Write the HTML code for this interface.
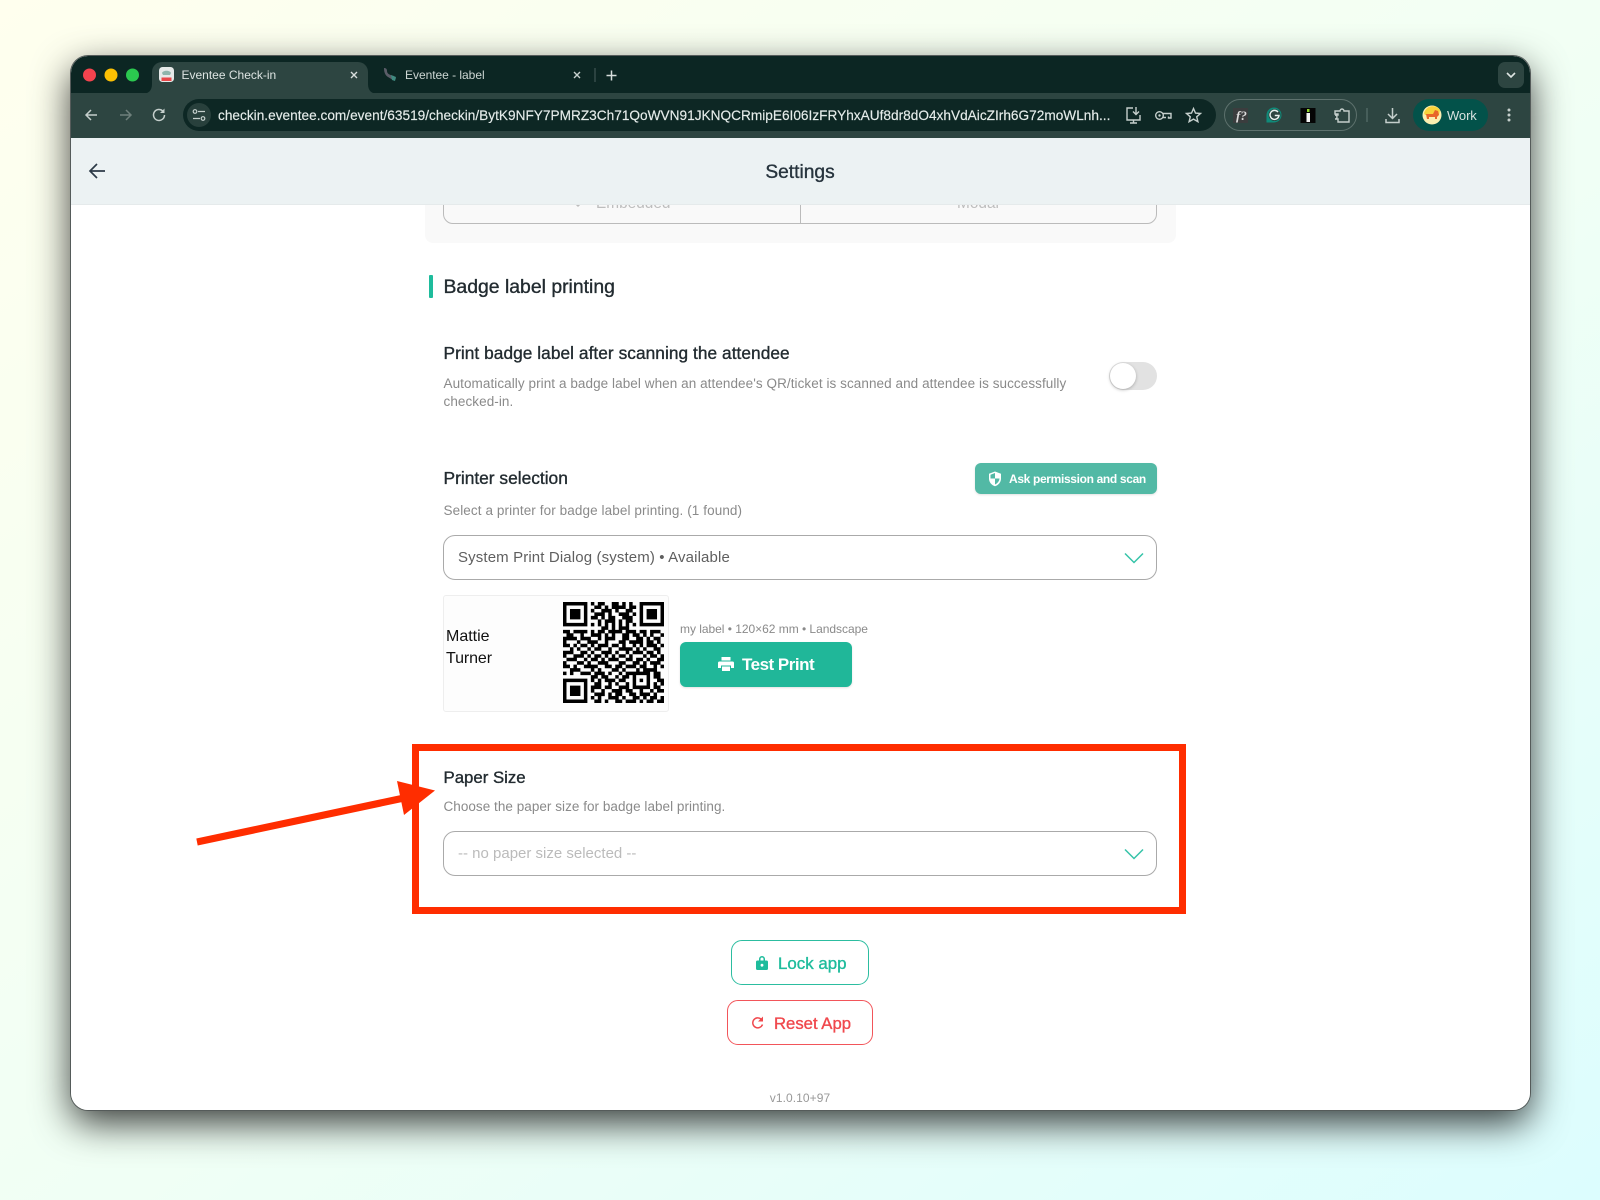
<!DOCTYPE html>
<html lang="en"><head><meta charset="utf-8"><title>Eventee Check-in Settings</title>
<style>
*{box-sizing:border-box}
html,body{margin:0;padding:0}
body{width:1600px;height:1200px;overflow:hidden;position:relative;background:linear-gradient(145deg,#ffffee 0%,#f0fff5 55%,#dcfdfe 100%);font-family:"Liberation Sans",Arial,sans-serif}
.abs,.t{position:absolute}
.t{white-space:nowrap;line-height:1}
#win{position:absolute;left:71px;top:56px;width:1459px;height:1054px;border-radius:17px;box-shadow:0 0 0 1px #555b5a,0 13px 38px rgba(0,0,0,.78)}
.med{-webkit-text-stroke:.35px currentColor}
.sel{position:absolute;left:443px;width:714px;height:45px;border:1px solid #aaa;border-radius:12px;background:#fff}
</style></head><body>
<div id="win"></div>

<!-- window surface -->
<div class="abs" style="left:71px;top:56px;width:1459px;height:1054px;border-radius:17px;overflow:hidden;background:#fff">
  <div class="abs" style="left:0;top:0;width:1459px;height:37px;background:#0c2623"></div>
  <div class="abs" style="left:0;top:37px;width:1459px;height:45px;background:#2d4541"></div>
  <div class="abs" style="left:0;top:82px;width:1459px;height:67px;background:#ecf2f3;border-bottom:1px solid #e5eaeb"></div>
</div>

<!-- active tab -->
<div class="abs" style="left:152px;top:62px;width:216px;height:32px;background:#2d4541;border-radius:10px 10px 0 0"></div>
<svg class="abs" style="left:0;top:0" width="1600" height="200">
  <path d="M142 94c6 0 10-3 10-10v10zM368 84c0 7 4 10 10 10h-10z" fill="#2d4541"/>
  <circle cx="89.500" cy="75" r="6.500" fill="#f4434e"/>
  <circle cx="111" cy="75" r="6.500" fill="#fcc003"/>
  <circle cx="132.500" cy="75" r="6.500" fill="#2bc84f"/>
  <!-- favicon 1 -->
  <rect x="159" y="67" width="15" height="15" rx="3.500" fill="#e6e9e8"/>
  <path d="M162 73c1-3 8-3 9 0l-1 2h-7z" fill="#8fb5ac"/>
  <rect x="161.500" y="77.500" width="10" height="3.500" fill="#e8484a"/>
  <!-- favicon 2 -->
  <path d="M384 68c2 0 3 1 3 3 0 3 3 4 7 5l2 3-3 1-5-3c-3-2-4-5-4-9z" fill="#5b5d68"/>
  <path d="M391 75l5 2-1 4-3-1z" fill="#3f8a80"/>
  <!-- tab closes -->
  <path d="M351 72l6 6M357 72l-6 6" stroke="#d7dedc" stroke-width="1.400" fill="none"/>
  <path d="M574 72l6 6M580 72l-6 6" stroke="#c8d2cf" stroke-width="1.400" fill="none"/>
  <path d="M595 68v14" stroke="#4a5f5c" stroke-width="1"/>
  <path d="M611.500 70.500v10M606.500 75.500h10" stroke="#d7dedc" stroke-width="1.500"/>
  <!-- chevron btn -->
  <rect x="1498" y="62" width="26" height="26" rx="7" fill="#2d4541"/>
  <path d="M1507 73l4 4 4-4" stroke="#dfe6e4" stroke-width="1.600" fill="none"/>
  <!-- nav -->
  <path d="M97 115H86M91 110l-5 5 5 5" stroke="#c5cfcc" stroke-width="1.500" fill="none"/>
  <path d="M120 115h11M126 110l5 5-5 5" stroke="#6f807c" stroke-width="1.500" fill="none"/>
  <path d="M164.500 115a5.500 5.500 0 1 1-1.700-4" stroke="#c5cfcc" stroke-width="1.500" fill="none"/>
  <path d="M164.500 108.500v4.500h-4.500" fill="#c5cfcc"/>
  <!-- url bar -->
  <rect x="183" y="99" width="1033" height="32" rx="16" fill="#0d2724"/>
  <circle cx="199" cy="115" r="12" fill="#28403c"/>
  <circle cx="195" cy="111.500" r="1.800" fill="none" stroke="#c5cfcc" stroke-width="1.200"/>
  <path d="M198 111.500h7M193 118.500h7" stroke="#c5cfcc" stroke-width="1.200"/>
  <circle cx="203" cy="118.500" r="1.800" fill="none" stroke="#c5cfcc" stroke-width="1.200"/>
  <!-- install -->
  <path d="M1133 108h-6v12h13v-5M1130 123h7M1133.500 120v3M1136 107v7M1133 111.500l3 3 3-3" stroke="#c5cfcc" stroke-width="1.400" fill="none"/>
  <!-- key -->
  <circle cx="1159.500" cy="115.500" r="3.800" fill="none" stroke="#c5cfcc" stroke-width="1.400"/>
  <circle cx="1159.500" cy="115.500" r="1.200" fill="#c5cfcc"/>
  <path d="M1163 113.500h8v4.500h-2.500v-1.500M1163 117.500h3" stroke="#c5cfcc" stroke-width="1.400" fill="none"/>
  <!-- star -->
  <path d="M1193.500 108.500l2 4.600 5 .4-3.800 3.300 1.200 4.900-4.400-2.600-4.400 2.600 1.200-4.900-3.800-3.300 5-.4z" fill="none" stroke="#c5cfcc" stroke-width="1.400"/>
  <!-- ext pill -->
  <rect x="1224.500" y="99.500" width="132" height="31" rx="15.500" fill="none" stroke="#5d716d"/>
  <rect x="1233" y="108" width="15" height="15" fill="#3b3d3e"/>
  <!-- G -->
  <path d="M1274 107.500a7.500 7.500 0 1 1 0 15h-7.500v-7.500a7.500 7.500 0 0 1 7.500-7.500z" fill="#0f8a79"/>
  <circle cx="1274.500" cy="115" r="6" fill="#2d4541"/>
  <path d="M1278 112a4.500 4.500 0 1 0 1 3.500h-4.200" fill="none" stroke="#e7f2ef" stroke-width="1.400"/>
  <!-- i -->
  <rect x="1300.500" y="108" width="15" height="15" fill="#050505"/>
  <rect x="1307" y="109" width="2.500" height="3" fill="#8fd32c"/>
  <rect x="1306.500" y="113" width="3.500" height="9" fill="#f4f4f4"/>
  <!-- puzzle -->
  <path d="M1335 110h5a2 2 0 0 1 4 0h5v11h-11v-3h-3a1.800 1.800 0 0 0 0-4h3v-1h-3z" transform="translate(0 1)" fill="none" stroke="#c5cfcc" stroke-width="1.400"/>
  <path d="M1367 108v14" stroke="#57706b" stroke-width="1.200"/>
  <!-- download -->
  <path d="M1392.500 108v10M1388 114l4.500 4.500 4.500-4.500M1386 119v3.500h13V119" stroke="#c5cfcc" stroke-width="1.500" fill="none"/>
  <!-- work pill -->
  <rect x="1413" y="99" width="75" height="32" rx="16" fill="#03524a"/>
  <circle cx="1432" cy="115" r="9.500" fill="#fbeeb0"/>
  <path d="M1424 113a9 9 0 0 1 16-3l-1 5h-14z" fill="#f7d33b"/>
  <path d="M1426 114h7l2-4 3 1 1 4-2 2v2h-2v-2h-6v2h-2z" fill="#e8662a"/>
  <!-- dots -->
  <circle cx="1509" cy="110" r="1.500" fill="#c5cfcc"/><circle cx="1509" cy="115" r="1.500" fill="#c5cfcc"/><circle cx="1509" cy="120" r="1.500" fill="#c5cfcc"/>
  <!-- settings back -->
  <path d="M105 171H90.500M97 164l-7 7 7 7" stroke="#2c3a47" stroke-width="1.700" fill="none"/>
</svg>
<div class="t" style="left:181.500px;top:69px;font-size:12px;color:#dde4e2">Eventee Check-in</div>
<div class="t" style="left:405px;top:69px;font-size:12px;color:#cdd6d3;letter-spacing:-.03px">Eventee - label</div>
<div class="t med" style="left:218px;top:109px;font-size:13.670px;color:#e5ecea;width:905px;overflow:hidden;-webkit-text-stroke-width:.15px">checkin.eventee.com/event/63519/checkin/BytK9NFY7PMRZ3Ch71QoWVN91JKNQCRmipE6I06IzFRYhxAUf8dr8dO4xhVdAicZIrh6G72moWLnh...</div>
<div class="t" style="left:1236px;top:108px;font:italic 700 13px 'Liberation Serif',serif;color:#dcdcdc">f?</div>
<div class="t" style="left:1447px;top:109px;font-size:13px;color:#d7e2df;letter-spacing:-.1px">Work</div>
<div class="t med" style="left:0;width:1600px;top:163px;text-align:center;font-size:19.200px;color:#27343d">Settings</div>

<!-- clipped content -->
<div class="abs" style="left:71px;top:205px;width:1459px;height:905px;overflow:hidden;border-radius:0 0 17px 17px">
  <div class="abs" style="left:354px;top:-5px;width:751px;height:43px;background:#f9f9f9;border-radius:0 0 8px 8px"></div>
  <div class="abs" style="left:372px;top:-29px;width:714px;height:48px;border:1px solid #bbb;border-radius:0 0 10px 10px"></div>
  <div class="abs" style="left:729px;top:-29px;width:1px;height:48px;background:#bbb"></div>
  <div class="t" style="left:525px;top:-9px;font-size:15.400px;color:#bdbdbd">Embedded</div>
  <div class="t" style="left:886px;top:-9px;font-size:15.400px;color:#bdbdbd">Modal</div>
  <svg class="abs" style="left:500px;top:-5px" width="16" height="10"><path d="M2 1l5 5 6-6" stroke="#bdbdbd" stroke-width="1.500" fill="none"/></svg>
</div>

<!-- badge section -->
<div class="abs" style="left:429px;top:275px;width:4px;height:23px;background:#1ebc9c;border-radius:1px"></div>
<div class="t med" style="left:443.500px;top:278px;font-size:19.400px;color:#222b30">Badge label printing</div>
<div class="t med" style="left:443.500px;top:345px;font-size:17.300px;color:#222b30;letter-spacing:.05px">Print badge label after scanning the attendee</div>
<div class="t" style="left:443.500px;top:377px;font-size:13.500px;color:#8a8a8a;letter-spacing:.07px">Automatically print a badge label when an attendee's QR/ticket is scanned and attendee is successfully</div>
<div class="t" style="left:443.500px;top:395px;font-size:13.500px;color:#8a8a8a;letter-spacing:.07px">checked-in.</div>
<div class="abs" style="left:1109px;top:362px;width:48px;height:28px;border-radius:14px;background:#e2e2e2"></div>
<div class="abs" style="left:1110px;top:363px;width:26px;height:26px;border-radius:50%;background:#fff;box-shadow:0 1px 3px rgba(0,0,0,.25)"></div>

<div class="t med" style="left:443.500px;top:470px;font-size:17.400px;color:#222b30;letter-spacing:-.02px">Printer selection</div>
<div class="abs" style="left:975px;top:463px;width:182px;height:31px;border-radius:6px;background:#52b9a5;box-shadow:0 1px 2px rgba(0,0,0,.12)"></div>
<svg class="abs" style="left:988px;top:471px" width="14" height="16" viewBox="0 0 14 16"><path d="M7 .5l6 2.300v4.700c0 3.800-2.500 6.500-6 7.800-3.500-1.300-6-4-6-7.800V2.800z" fill="#fff"/><path d="M7 2v5.500H2.500V3.800zM7 7.500h4.500c-.2 2.800-2 4.800-4.500 6z" fill="#52b9a5"/></svg>
<div class="t" style="left:1009px;top:473px;font-size:12px;font-weight:700;color:#fff;letter-spacing:-.34px">Ask permission and scan</div>
<div class="t" style="left:443.500px;top:504px;font-size:13.500px;color:#8a8a8a;letter-spacing:.1px">Select a printer for badge label printing. (1 found)</div>

<div class="sel" style="top:535px"></div>
<div class="t" style="left:458px;top:550px;font-size:15px;color:#5f5f5f;letter-spacing:.13px">System Print Dialog (system) • Available</div>
<svg class="abs" style="left:1124px;top:551px" width="20" height="14"><path d="M1 2.500l9 9 9-9" stroke="#35c4a8" stroke-width="1.500" fill="none"/></svg>

<!-- label preview -->
<div class="abs" style="left:443px;top:595px;width:226px;height:117px;background:#fdfdfd;border:1px solid #eeeeee;border-radius:3px"></div>
<div class="t" style="left:446px;top:628.500px;font-size:16px;color:#111">Mattie</div>
<div class="t" style="left:446px;top:650.500px;font-size:16px;color:#111;letter-spacing:-.1px">Turner</div>
<svg class="abs" style="left:563px;top:602px" width="101" height="101" viewBox="0 0 29 29">
  <path fill-rule="evenodd" d="M0 0h7v7H0zM1 1v5h5V1zM2 2h3v3H2zM22 0h7v7h-7zM23 1v5h5V1zM24 2h3v3h-3zM0 22h7v7H0zM1 23v5h5v-5zM2 24h3v3H2z" fill="#000"/>
  <path stroke="#000" stroke-width="1.020" fill="none" d="M8 .5h1M10 .5h2M14 .5h2M17 .5h1M19 .5h1
  M9 1.500h2M12 1.500h1M14 1.500h4M19 1.500h2
  M8 2.500h1M11 2.500h3M15 2.500h1M18 2.500h2
  M9 3.500h3M13 3.500h1M16 3.500h3M20 3.500h1
  M8 4.500h2M11 4.500h1M13 4.500h2M17 4.500h3
  M10 5.500h1M12 5.500h3M16 5.500h1M18 5.500h2
  M8 6.500h1M10 6.500h1M12 6.500h1M14 6.500h1M16 6.500h1M18 6.500h1M20 6.500h1
  M11 7.500h2M14 7.500h1M16 7.500h3
  M0 8.500h2M3 8.500h3M6 8.500h1M8 8.500h1M10 8.500h2M13 8.500h3M16 8.500h1M18 8.500h3M22 8.500h2M25 8.500h3
  M1 9.500h2M5 9.500h1M8 9.500h2M10 9.500h1M12 9.500h1M14 9.500h1M17 9.500h2M20 9.500h2M23 9.500h1M25 9.500h1M28 9.500h1
  M0 10.500h4M5 10.500h3M10 10.500h1M12 10.500h3M17 10.500h2M21 10.500h2M24 10.500h1M26 10.500h2
  M0 11.500h1M4 11.500h1M7 11.500h3M12 11.500h1M16 11.500h2M19 11.500h4M24 11.500h2M27 11.500h1
  M0 12.500h2M3 12.500h1M5 12.500h2M8 12.500h1M10 12.500h3M14 12.500h2M17 12.500h1M20 12.500h1M22 12.500h1M24 12.500h3M28 12.500h1
  M2 13.500h1M4 13.500h1M7 13.500h1M9 13.500h2M13 13.500h1M16 13.500h4M21 13.500h1M23 13.500h1M26 13.500h2
  M0 14.500h3M5 14.500h2M8 14.500h1M11 14.500h3M15 14.500h1M18 14.500h1M20 14.500h3M24 14.500h2M27 14.500h1
  M0 15.500h1M3 15.500h3M7 15.500h1M9 15.500h2M12 15.500h1M14 15.500h1M16 15.500h2M19 15.500h1M23 15.500h1M25 15.500h2M28 15.500h1
  M1 16.500h3M6 16.500h1M8 16.500h2M11 16.500h1M13 16.500h3M18 16.500h2M21 16.500h2M24 16.500h1M27 16.500h2
  M0 17.500h1M4 17.500h2M7 17.500h1M10 17.500h3M16 17.500h2M20 17.500h2M23 17.500h1M25 17.500h3
  M0 18.500h2M3 18.500h1M6 18.500h4M12 18.500h2M15 18.500h2M18 18.500h3M22 18.500h2M26 18.500h1M28 18.500h1
  M2 19.500h3M8 19.500h1M10 19.500h1M14 19.500h2M17 19.500h1M21 19.500h1M23 19.500h4
  M0 20.500h1M2 20.500h1M5 20.500h3M9 20.500h3M13 20.500h1M16 20.500h1M18 20.500h7M26 20.500h2
  M8 21.500h2M11 21.500h2M15 21.500h1M17 21.500h2M20 21.500h1M24 21.500h1M26 21.500h2
  M8 22.500h1M10 22.500h1M12 22.500h3M16 22.500h2M20 22.500h1M22 22.500h1M24 22.500h1M27 22.500h2
  M9 23.500h2M13 23.500h1M15 23.500h1M18 23.500h1M20 23.500h1M24 23.500h1M26 23.500h1M28 23.500h1
  M8 24.500h3M12 24.500h2M16 24.500h3M20 24.500h5M26 24.500h2
  M8 25.500h1M11 25.500h1M14 25.500h3M18 25.500h2M22 25.500h1M25 25.500h1M27 25.500h2
  M9 26.500h3M13 26.500h1M15 26.500h2M19 26.500h2M22 26.500h3M26 26.500h1
  M8 27.500h1M10 27.500h1M13 27.500h3M17 27.500h1M20 27.500h2M23 27.500h1M25 27.500h2M28 27.500h1
  M9 28.500h2M12 28.500h1M15 28.500h2M18 28.500h3M22 28.500h1M24 28.500h2M27 28.500h2"/>
</svg>
<div class="t" style="left:680px;top:623px;font-size:12px;color:#8a8a8a;letter-spacing:-.03px">my label • 120×62 mm • Landscape</div>
<div class="abs" style="left:680px;top:642px;width:172px;height:45px;background:#20b799;border-radius:6px;box-shadow:0 1px 2px rgba(0,0,0,.12)"></div>
<svg class="abs" style="left:718px;top:657px" width="16" height="15" viewBox="0 0 16 15"><path d="M3.500 0h9v3.500h-9zM1.500 4.500h13a1.500 1.500 0 0 1 1.500 1.500v5h-3V8.500H3V11H0V6a1.500 1.500 0 0 1 1.500-1.500zM4 9.500h8V14H4z" fill="#fff"/></svg>
<div class="t" style="left:742px;top:656px;font-size:17px;font-weight:700;color:#fff;letter-spacing:-.5px">Test Print</div>

<!-- paper size -->
<div class="t med" style="left:443.500px;top:770px;font-size:16.800px;color:#222b30">Paper Size</div>
<div class="t" style="left:443.500px;top:800px;font-size:13.500px;color:#8a8a8a;letter-spacing:.04px">Choose the paper size for badge label printing.</div>
<div class="sel" style="top:831px"></div>
<div class="t" style="left:458px;top:846px;font-size:15px;color:#bbbbbb">-- no paper size selected --</div>
<svg class="abs" style="left:1124px;top:847px" width="20" height="14"><path d="M1 2.500l9 9 9-9" stroke="#35c4a8" stroke-width="1.500" fill="none"/></svg>

<!-- lock/reset -->
<div class="abs" style="left:731px;top:940px;width:138px;height:45px;border:1.500px solid #2cbda0;border-radius:11px;background:#fff"></div>
<svg class="abs" style="left:756px;top:955px" width="12" height="15" viewBox="0 0 12 15"><path d="M1.500 5.500H3V4a3 3 0 0 1 6 0v1.500h1.500A1.500 1.500 0 0 1 12 7v6.500a1.500 1.500 0 0 1-1.500 1.500h-9A1.500 1.500 0 0 1 0 13.500V7a1.500 1.500 0 0 1 1.500-1.500zM4.500 5.500h3V4a1.500 1.500 0 0 0-3 0z" fill="#1ebc9c"/><circle cx="6" cy="10.200" r="1.400" fill="#fff"/></svg>
<div class="t med" style="left:778px;top:956px;font-size:16.900px;color:#1ebc9c">Lock app</div>
<div class="abs" style="left:727px;top:1000px;width:146px;height:45px;border:1.500px solid #f2555a;border-radius:11px;background:#fff"></div>
<svg class="abs" style="left:751px;top:1016px" width="14" height="14" viewBox="0 0 14 14"><path d="M11.500 8.500A5 5 0 1 1 10 3" fill="none" stroke="#f0484d" stroke-width="1.500"/><path d="M12 .5v5H7z" fill="#f0484d"/></svg>
<div class="t med" style="left:774px;top:1016px;font-size:16.700px;color:#f0484d">Reset App</div>
<div class="t" style="left:0;width:1600px;text-align:center;top:1092px;font-size:12px;color:#999;letter-spacing:.08px">v1.0.10+97</div>

<!-- annotation -->
<div class="abs" style="left:412px;top:744px;width:774px;height:170px;border:7px solid #ff2d00"></div>
<svg class="abs" style="left:0;top:0;pointer-events:none" width="1600" height="1200">
  <path d="M196.300 838.500L408 793.500l1.500 7L197.700 845.500z" fill="#ff2d00"/>
  <path d="M397 781l38 9.500-31 24.500z" fill="#ff2d00"/>
</svg>
</body></html>
